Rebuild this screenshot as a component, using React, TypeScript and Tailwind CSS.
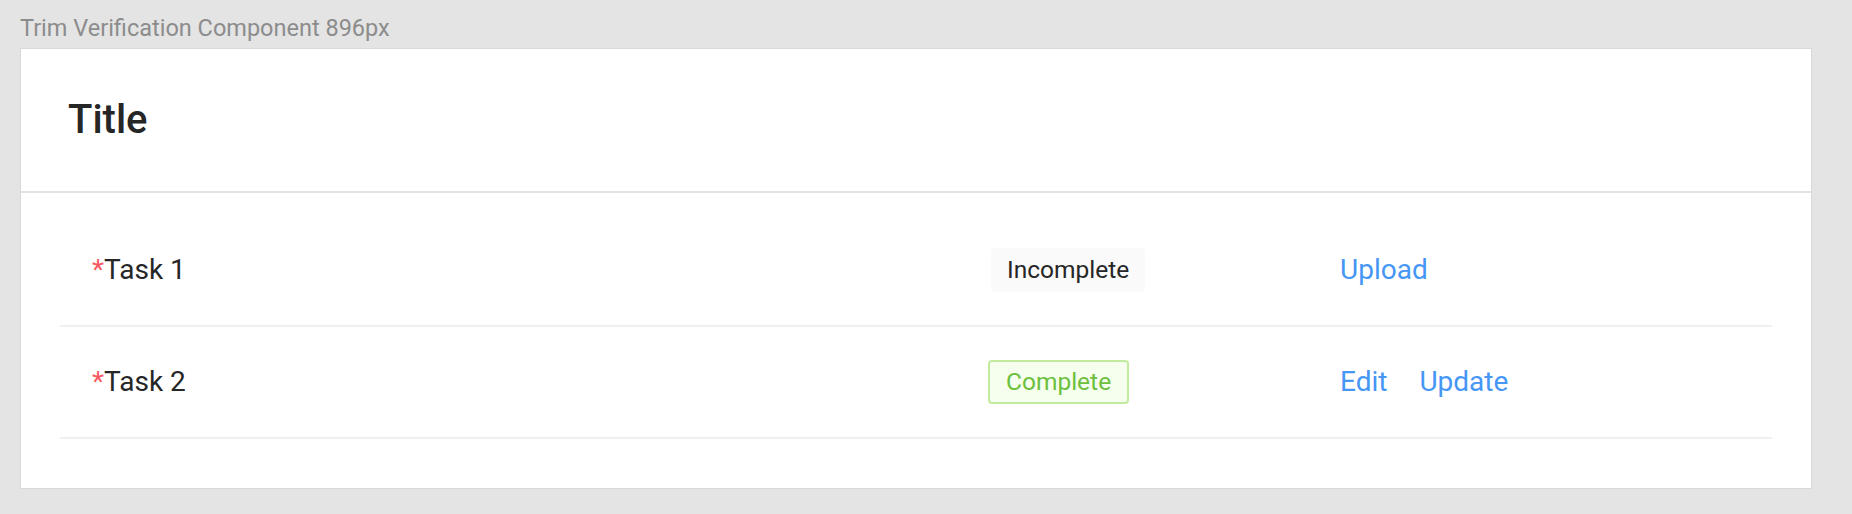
import { Fragment } from 'react'

type Task = {
  name: string
  done: boolean
  actions: string[]
}

const tasks: Task[] = [
  { name: 'Task 1', done: false, actions: ['Upload'] },
  { name: 'Task 2', done: true, actions: ['Edit', 'Update'] },
]

function StatusTag({ done }: { done: boolean }) {
  if (done) {
    return (
      <span className="inline-flex h-[44px] items-center rounded-[4px] border-2 border-[#c2eb9f] bg-[#f6ffed] px-[16px] text-[24.5px] text-[#6cc03e]">
        Complete
      </span>
    )
  }
  return (
    <span className="ml-[3px] inline-flex h-[44px] items-center rounded-[4px] bg-[#fafafa] px-[16px] text-[24.5px] text-[#262626]">
      Incomplete
    </span>
  )
}

export default function App() {
  return (
    <div className="min-h-[514px] bg-[#e4e4e4] px-[20px] pt-[14px] pb-[27px] font-['Roboto',sans-serif]">
      {/* Frame label */}
      <div className="mb-[6px] text-[23.5px] leading-[28px] text-[#8c8c8c]">
        Trim Verification Component 896px
      </div>

      {/* Card */}
      <div className="w-[1792px] border border-[#d9d9d9] bg-white">
        <div className="flex h-[144px] items-center border-b-2 border-[#e3e3e3] pl-[47px]">
          <h1 className="text-[40px] font-medium text-[#262626]">Title</h1>
        </div>

        <div className="px-[39px] pt-[22px] pb-[49px]">
          {tasks.map((task) => (
            <Fragment key={task.name}>
              <div className="flex h-[112px] items-center border-b-2 border-[#f0f0f0] pl-[32px] text-[28px]">
                <div className="w-[896px] text-[#262626]">
                  <span className="text-[#f5222d]/75">*</span>
                  {task.name}
                </div>
                <div className="w-[352px]">
                  <StatusTag done={task.done} />
                </div>
                <div className="flex gap-[32px] text-[#4596f5]">
                  {task.actions.map((a) => (
                    <span key={a}>{a}</span>
                  ))}
                </div>
              </div>
            </Fragment>
          ))}
        </div>
      </div>
    </div>
  )
}
